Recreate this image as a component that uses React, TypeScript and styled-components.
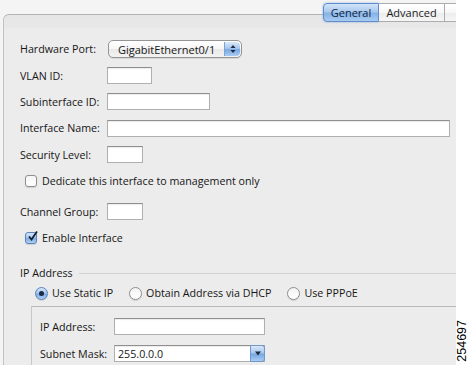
import React from "react";
import styled, { createGlobalStyle } from "styled-components";

const Global = createGlobalStyle`
  html, body { margin: 0; padding: 0; background: #ffffff; }
  body { font-family: "Open Sans", "DejaVu Sans", sans-serif; font-size: 10.7px; color: #161616; }
  * { box-sizing: border-box; }
`;

const Page = styled.div`
  display: flex;
  width: 469px;
  height: 365px;
  overflow: hidden;
  background: #ffffff;
`;

const Window = styled.div`
  width: 456px;
  height: 365px;
  display: flex;
  flex-direction: column;
  background: #f4f4f4;
  overflow: hidden;
`;

const Margin = styled.div`
  flex: 1;
  display: flex;
  flex-direction: column;
  justify-content: flex-end;
  align-items: center;
  padding-bottom: 3px;
`;

const FigureNo = styled.span`
  writing-mode: vertical-rl;
  transform: rotate(180deg);
  font-family: "Liberation Sans", Arial, sans-serif;
  font-size: 12.5px;
  color: #000;
  line-height: 1;
`;

const TabBar = styled.div`
  display: flex;
  justify-content: flex-start;
  padding: 3px 0 0 323px;
  height: 22px;
  margin-bottom: -8px;
  position: relative;
  z-index: 1;
`;

const Tab = styled.div<{ $active?: boolean; $first?: boolean }>`
  height: 19px;
  display: flex;
  align-items: center;
  justify-content: center;
  padding: 0 10px;
  font-size: 11px;
  white-space: nowrap;
  color: ${(p) => (p.$active ? "#0e1f3c" : "#1c1c1c")};
  border: 1px solid ${(p) => (p.$active ? "#5f8ccb" : "#acacac")};
  border-left-width: ${(p) => (p.$first ? "1px" : "0")};
  border-radius: ${(p) => (p.$first ? "4px 0 0 4px" : "0")};
  background: ${(p) =>
    p.$active
      ? "linear-gradient(#d3e4f8 0%, #a9c9ef 45%, #86b2e6 55%, #a7cbf2 100%)"
      : "linear-gradient(#ffffff 0%, #f7f7f7 50%, #ececec 51%, #f6f6f6 100%)"};
  box-shadow: ${(p) => (p.$active ? "0 0 2px rgba(60,120,200,0.6)" : "none")};
  min-width: ${(p) => (p.$active ? "56px" : "66px")};
`;

const Panel = styled.div`
  flex: 1;
  margin-left: 3px;
  border-top: 1px solid #b3b3b3;
  border-left: 1px solid #c2c2c2;
  border-top-left-radius: 6px;
  background: linear-gradient(#e6e6e6 0px, #e8e8e8 13px, #ececec 14px, #ececec 100%);
  padding: 21px 0 0 16px;
  display: flex;
  flex-direction: column;
`;

const Row = styled.div<{ $h?: number; $mt?: number; $indent?: number }>`
  display: flex;
  align-items: center;
  height: ${(p) => p.$h ?? 26.4}px;
  margin-top: ${(p) => p.$mt ?? 0}px;
  padding-left: ${(p) => p.$indent ?? 0}px;
  flex-shrink: 0;
`;

const Label = styled.span<{ $w: number }>`
  width: ${(p) => p.$w}px;
  flex-shrink: 0;
  white-space: nowrap;
`;

const TextInput = styled.div<{ $w: number }>`
  width: ${(p) => p.$w}px;
  height: 17px;
  background: #ffffff;
  border: 1px solid #b0b0b0;
  border-top-color: #8f8f8f;
  box-shadow: inset 0 1px 1px rgba(0, 0, 0, 0.08);
  display: flex;
  align-items: center;
  padding-left: 3px;
  position: relative;
`;

const PopUp = styled.div`
  width: 134px;
  height: 18px;
  margin-left: 1px;
  border: 1px solid #959595;
  border-radius: 5px;
  background: linear-gradient(#ffffff 0%, #f6f6f6 50%, #e9e9e9 51%, #f3f3f3 100%);
  display: flex;
  align-items: center;
  justify-content: space-between;
  padding: 0 1px 0 9px;
  font-size: 11px;
  box-shadow: 0 1px 0 rgba(0, 0, 0, 0.08);
`;

const Stepper = styled.div`
  width: 16px;
  height: 14px;
  border-radius: 0 4px 4px 0;
  background: linear-gradient(#dbe8f8 0%, #a8c7ee 45%, #78a8e2 55%, #a9ccf3 100%);
  border-left: 1px solid #7ea4d4;
  display: flex;
  align-items: center;
  justify-content: center;
`;

const ComboArrow = styled.div`
  position: absolute;
  right: -1px;
  top: -1px;
  width: 15px;
  height: 17px;
  border-radius: 0 3px 3px 0;
  border: 1px solid #6f98cf;
  background: linear-gradient(#dbe8f8 0%, #a8c7ee 45%, #78a8e2 55%, #a9ccf3 100%);
  display: flex;
  align-items: center;
  justify-content: center;
`;

const Box = styled.span<{ $on?: boolean }>`
  width: 12px;
  height: 12px;
  flex-shrink: 0;
  border-radius: 3px;
  border: 1px solid ${(p) => (p.$on ? "#5b84bd" : "#8e8e8e")};
  background: ${(p) =>
    p.$on
      ? "linear-gradient(#d6e6f9 0%, #a5c6ee 45%, #7eacE3 55%, #b0d0f4 100%)"
      : "linear-gradient(#f6f6f6 0%, #ffffff 100%)"};
  margin-right: 5px;
  display: flex;
  align-items: center;
  justify-content: center;
  box-shadow: 0 1px 1px rgba(0, 0, 0, 0.12);
`;

const Radio = styled.span<{ $on?: boolean }>`
  width: 13px;
  height: 13px;
  flex-shrink: 0;
  border-radius: 50%;
  border: 1px solid ${(p) => (p.$on ? "#5b84bd" : "#8e8e8e")};
  background: ${(p) =>
    p.$on
      ? "linear-gradient(#d6e6f9 0%, #a5c6ee 45%, #7eacE3 55%, #b0d0f4 100%)"
      : "linear-gradient(#f4f4f4 0%, #ffffff 100%)"};
  margin-right: 4px;
  display: flex;
  align-items: center;
  justify-content: center;
  box-shadow: 0 1px 1px rgba(0, 0, 0, 0.12);
  &::after {
    content: "";
    display: ${(p) => (p.$on ? "block" : "none")};
    width: 5px;
    height: 5px;
    border-radius: 50%;
    background: #1a2a40;
  }
`;

const RadioItem = styled.span`
  display: flex;
  align-items: center;
  margin-right: 16px;
  white-space: nowrap;
`;

const GroupHeader = styled.div`
  display: flex;
  align-items: center;
  height: 22px;
  margin-top: 11px;
  flex-shrink: 0;
  &::after {
    content: "";
    flex: 1;
    height: 1px;
    background: #d2d2d2;
    margin-left: 6px;
  }
`;

const Inner = styled.div`
  flex: 1;
  margin: 4px 0 0 11px;
  border-top: 1px solid #b9b9b9;
  border-left: 1px solid #c8c8c8;
  padding: 6px 0 0 8px;
  display: flex;
  flex-direction: column;
`;

const Arrows = () => (
  <svg width="6" height="10" viewBox="0 0 6 10">
    <path d="M0.5 4 L3 1 L5.5 4 Z" fill="#1d2b3d" />
    <path d="M0.5 6 L3 9 L5.5 6 Z" fill="#1d2b3d" />
  </svg>
);

const Down = () => (
  <svg width="6" height="5" viewBox="0 0 6 5">
    <path d="M0 0.5 L6 0.5 L3 4.5 Z" fill="#1d2b3d" />
  </svg>
);

const Check = () => (
  <svg width="11" height="11" viewBox="0 0 11 11" style={{ marginTop: -2, marginRight: -2 }}>
    <path d="M2 5.5 L4.5 8.5 L10 0.5" stroke="#132033" strokeWidth="1.8" fill="none" />
  </svg>
);

export default function App() {
  return (
    <Page>
      <Global />
      <Window>
        <TabBar>
          <Tab $active $first>General</Tab>
          <Tab>Advanced</Tab>
          <Tab>&nbsp;</Tab>
        </TabBar>
        <Panel>
          <Row>
            <Label $w={87}>Hardware Port:</Label>
            <PopUp>
              <span>GigabitEthernet0/1</span>
              <Stepper>
                <Arrows />
              </Stepper>
            </PopUp>
          </Row>
          <Row>
            <Label $w={87}>VLAN ID:</Label>
            <TextInput $w={45} />
          </Row>
          <Row>
            <Label $w={87}>Subinterface ID:</Label>
            <TextInput $w={103} />
          </Row>
          <Row>
            <Label $w={87}>Interface Name:</Label>
            <TextInput $w={343} />
          </Row>
          <Row>
            <Label $w={87}>Security Level:</Label>
            <TextInput $w={36} />
          </Row>
          <Row $indent={5}>
            <Box />
            <span>Dedicate this interface to management only</span>
          </Row>
          <Row $mt={4}>
            <Label $w={87}>Channel Group:</Label>
            <TextInput $w={36} />
          </Row>
          <Row $indent={5}>
            <Box $on>
              <Check />
            </Box>
            <span>Enable Interface</span>
          </Row>
          <GroupHeader>IP Address</GroupHeader>
          <Row $h={18} $indent={15}>
            <RadioItem>
              <Radio $on />
              Use Static IP
            </RadioItem>
            <RadioItem>
              <Radio />
              Obtain Address via DHCP
            </RadioItem>
            <RadioItem>
              <Radio />
              Use PPPoE
            </RadioItem>
          </Row>
          <Inner>
            <Row $h={27}>
              <Label $w={74}>IP Address:</Label>
              <TextInput $w={151} />
            </Row>
            <Row $h={27}>
              <Label $w={74}>Subnet Mask:</Label>
              <TextInput $w={151}>
                255.0.0.0
                <ComboArrow>
                  <Down />
                </ComboArrow>
              </TextInput>
            </Row>
          </Inner>
        </Panel>
      </Window>
      <Margin>
        <FigureNo>254697</FigureNo>
      </Margin>
    </Page>
  );
}
